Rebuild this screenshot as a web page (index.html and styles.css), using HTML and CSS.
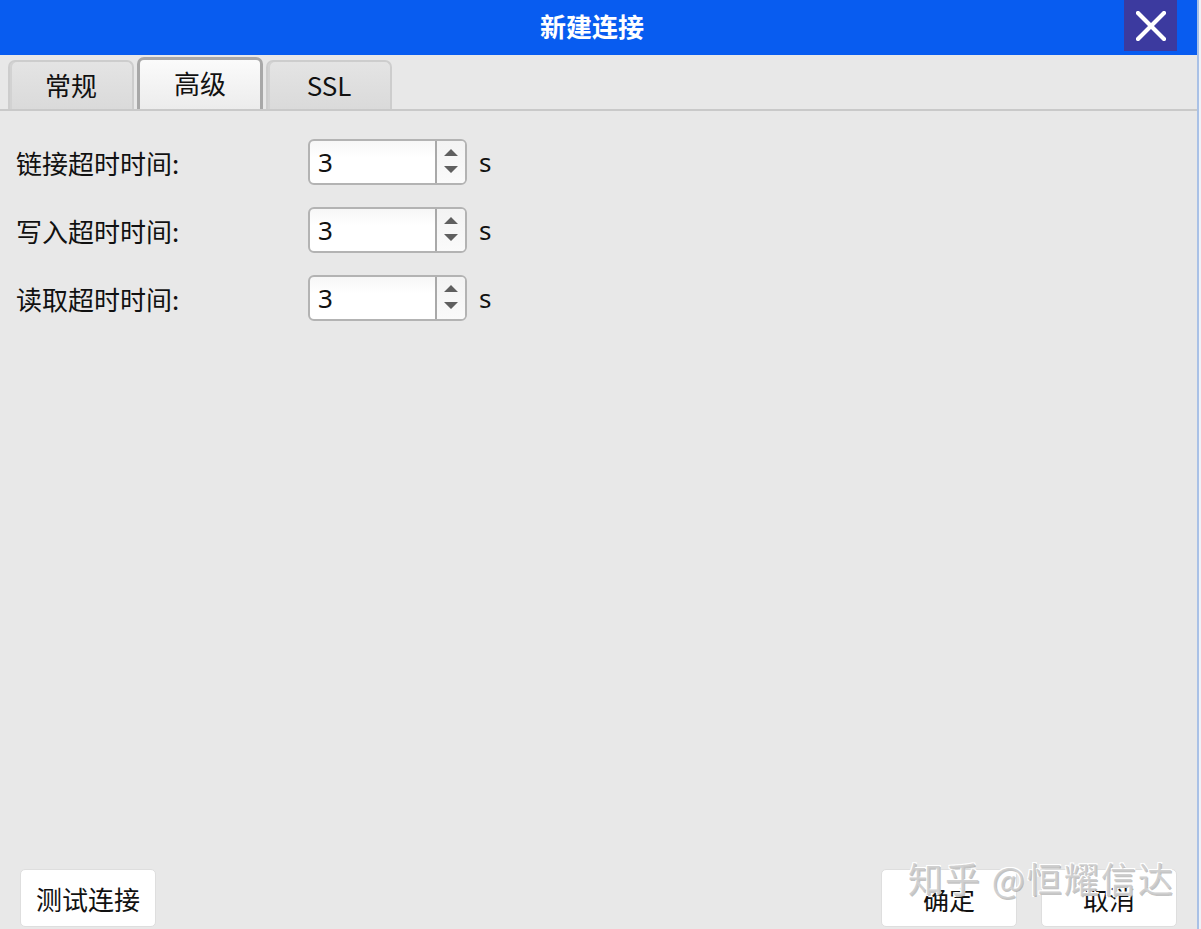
FILE: index.html
```html
<!DOCTYPE html>
<html lang="zh-CN">
<head>
<meta charset="utf-8">
<title>新建连接</title>
<link rel="stylesheet" href="styles.css">
</head>
<body>
<div class="window">
  <header class="titlebar">
    <div class="title">新建连接</div>
    <button class="close" aria-label="关闭">
      <svg width="30" height="30" viewBox="0 0 30 30"><path d="M2 2 L28 28 M28 2 L2 28" stroke="#fff" stroke-width="4.2" stroke-linecap="square" fill="none"/></svg>
    </button>
  </header>

  <nav class="tabs">
    <div class="tab">常规</div>
    <div class="tab active">高级</div>
    <div class="tab">SSL</div>
  </nav>

  <main class="content">
    <div class="row">
      <label class="label">链接超时时间:</label>
      <div class="spin">
        <span class="value">3</span>
        <span class="arrows">
          <svg width="16" height="30" viewBox="0 0 16 30"><path d="M1 9 L8 2 L15 9 Z M1 19 L15 19 L8 26 Z" fill="#5f5f5f"/></svg>
        </span>
      </div>
      <span class="unit">s</span>
    </div>
    <div class="row">
      <label class="label">写入超时时间:</label>
      <div class="spin">
        <span class="value">3</span>
        <span class="arrows">
          <svg width="16" height="30" viewBox="0 0 16 30"><path d="M1 9 L8 2 L15 9 Z M1 19 L15 19 L8 26 Z" fill="#5f5f5f"/></svg>
        </span>
      </div>
      <span class="unit">s</span>
    </div>
    <div class="row">
      <label class="label">读取超时时间:</label>
      <div class="spin">
        <span class="value">3</span>
        <span class="arrows">
          <svg width="16" height="30" viewBox="0 0 16 30"><path d="M1 9 L8 2 L15 9 Z M1 19 L15 19 L8 26 Z" fill="#5f5f5f"/></svg>
        </span>
      </div>
      <span class="unit">s</span>
    </div>
  </main>

  <footer class="footer">
    <button class="btn">测试连接</button>
    <div class="right-btns">
      <button class="btn">确定</button>
      <button class="btn">取消</button>
    </div>
    <div class="watermark">知乎 @恒耀信达</div>
  </footer>
</div>
</body>
</html>
```

FILE: styles.css
```css
* { box-sizing: border-box; }

html, body {
  margin: 0;
  padding: 0;
}

body {
  width: 1201px;
  height: 929px;
  overflow: hidden;
  background: #eef2f8;
  font-family: "Noto Sans", "Noto Sans CJK SC", sans-serif;
  color: #111;
}

.window {
  width: 1199px;
  height: 929px;
  display: flex;
  flex-direction: column;
  background: #e8e8e8;
  border-right: 2px solid #a9c1e6;
}

.titlebar {
  height: 55px;
  flex: none;
  display: flex;
  align-items: flex-start;
  background: #085cf0;
  padding-left: 60px;
  padding-right: 20px;
}

.title {
  flex: 1;
  text-align: center;
  color: #fff;
  font-family: "Noto Sans CJK SC", sans-serif;
  font-weight: 700;
  font-size: 26px;
  line-height: 52px;
}

.close {
  width: 53px;
  height: 51px;
  border: 0;
  padding: 0;
  margin: 0;
  background: #3c3a9f;
  display: flex;
  align-items: center;
  justify-content: center;
}

.tabs {
  flex: none;
  display: flex;
  align-items: flex-end;
  gap: 3px;
  height: 56px;
  padding-left: 8px;
  border-bottom: 2px solid #c9c9c9;
}

.tab {
  width: 126px;
  height: 49px;
  border: 2px solid #cdcdcd;
  border-bottom: 0;
  border-radius: 7px 7px 0 0;
  background: linear-gradient(#e4e4e4, #dadada);
  box-shadow: inset 2px 0 0 #d2d2d2;
  font-family: "Noto Sans CJK SC", sans-serif;
  font-size: 26px;
  text-align: center;
  line-height: 46px;
  color: #111;
}

.tab.active {
  height: 52px;
  border: 3px solid #a8a8a8;
  border-bottom: 0;
  background: linear-gradient(#fbfbfb, #ececec);
  box-shadow: none;
  line-height: 46px;
}

.content {
  flex: 1;
  padding: 28px 0 0 16px;
  display: flex;
  flex-direction: column;
  gap: 22px;
}

.row {
  display: flex;
  align-items: center;
  height: 46px;
}

.label {
  width: 292px;
  font-family: "Noto Sans CJK SC", sans-serif;
  font-size: 26px;
  color: #111;
}

.spin {
  width: 159px;
  height: 46px;
  display: flex;
  border: 2px solid #b3b3b3;
  border-radius: 6px;
  background: linear-gradient(#f7f7f7, #ffffff 40%);
  overflow: hidden;
}

.value {
  flex: 1;
  padding-left: 8px;
  font-size: 26px;
  line-height: 42px;
  color: #111;
  border-right: 2px solid #a9a9a9;
}

.arrows {
  width: 28px;
  display: flex;
  align-items: center;
  justify-content: center;
  background: linear-gradient(#f3f3f3, #fafafa);
}

.unit {
  margin-left: 12px;
  font-size: 26px;
  line-height: 40px;
  color: #111;
}

.footer {
  position: relative;
  flex: none;
  height: 60px;
  display: flex;
  justify-content: space-between;
  align-items: flex-start;
  padding: 0 20px 0 20px;
}

.right-btns {
  display: flex;
  gap: 24px;
}

.btn {
  width: 136px;
  height: 58px;
  margin: 0;
  background: #fff;
  border: 1px solid #dedede;
  border-radius: 5px;
  font-family: "Noto Sans CJK SC", sans-serif;
  font-size: 26px;
  color: #111;
  padding: 0;
}

.watermark {
  position: absolute;
  left: 908px;
  top: -13px;
  font-family: "Noto Sans CJK SC", sans-serif;
  font-size: 35px;
  line-height: 44px;
  letter-spacing: 2px;
  color: rgba(200, 200, 200, 0.85);
  text-shadow: -1px -1px 0 #fff, 1px 1px 0 rgba(120,120,120,0.45), 1px -1px 0 #fff, -1px 1px 0 #fff;
  white-space: nowrap;
  pointer-events: none;
}
```
